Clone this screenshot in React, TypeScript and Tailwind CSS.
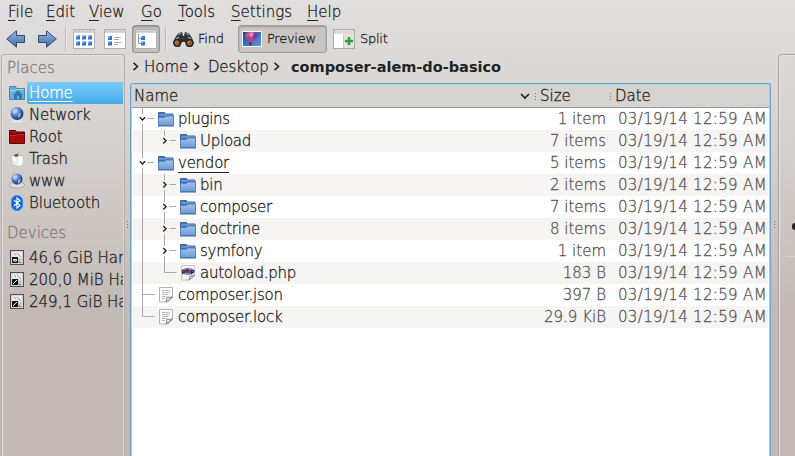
import React from 'react';

type Row = { name: string; depth: number; kind: 'folder' | 'php' | 'text'; open?: boolean; size: string };

const rows: Row[] = [
  { name: 'plugins', depth: 0, kind: 'folder', open: true, size: '1 item' },
  { name: 'Upload', depth: 1, kind: 'folder', size: '7 items' },
  { name: 'vendor', depth: 0, kind: 'folder', open: true, size: '5 items' },
  { name: 'bin', depth: 1, kind: 'folder', size: '2 items' },
  { name: 'composer', depth: 1, kind: 'folder', size: '7 items' },
  { name: 'doctrine', depth: 1, kind: 'folder', size: '8 items' },
  { name: 'symfony', depth: 1, kind: 'folder', size: '1 item' },
  { name: 'autoload.php', depth: 1, kind: 'php', size: '183 B' },
  { name: 'composer.json', depth: 0, kind: 'text', size: '397 B' },
  { name: 'composer.lock', depth: 0, kind: 'text', size: '29.9 KiB' },
];

function Folder() {
  return (
    <svg width="16" height="16" viewBox="0 0 16 16" className="block shrink-0">
      <defs>
        <linearGradient id="folderFront" x1="0" y1="0" x2="0" y2="1">
          <stop stopColor="#a3c4ea" />
          <stop offset="1" stopColor="#6c9ad6" />
        </linearGradient>
      </defs>
      <path d="M.5 14V1.500h6l1 1.500h7.500v3H.5z" fill="#4977b5" stroke="#3a659f" />
      <path d="M1 4h6l1-1h6.500" stroke="#83b0e5" fill="none" />
      <path d="M.5 6.500h6l1-1.500h8v9.500H.5z" fill="url(#folderFront)" stroke="#5482be" />
      <path d="M0 15h16" stroke="#3f6aa5" />
    </svg>
  );
}

function TextDoc() {
  return (
    <svg width="16" height="16" viewBox="0 0 16 16" className="block shrink-0">
      <path d="M1.500.5h13v10l-4.500 4.500H1.500z" fill="#fcfcfc" stroke="#b4b4b4" />
      <path d="M4 3.500h8M4 5.500h8M4 7.500h7M4 9.500h5M4 11.500h3" stroke="#b5b5b5" strokeDasharray="3 .5" />
      <path d="M8 15l1-4.500 5.500-.5z" fill="#eee" stroke="#777" strokeWidth=".9" />
    </svg>
  );
}

function PhpDoc() {
  return (
    <svg width="16" height="16" viewBox="0 0 16 16" className="block shrink-0">
      <path d="M1.500.5h13v10l-4.500 4.500H1.500z" fill="#f4f4f6" stroke="#c5c5c8" />
      <path d="M9 15l1-4 4.500-.5z" fill="#ddd" stroke="#777" strokeWidth=".8" />
      <ellipse cx="8" cy="6.500" rx="6.500" ry="3.500" fill="#8a7fc0" />
      <text x="8" y="8.300" textAnchor="middle" fontFamily="DejaVu Sans, sans-serif" fontSize="6" fontWeight="bold" stroke="none" fill="#1c1637">php</text>
    </svg>
  );
}

function Globe({ dish }: { dish?: boolean }) {
  return (
    <svg width="16" height="16" viewBox="0 0 16 16" className="block shrink-0">
      <defs>
        <radialGradient id="sea" cx=".35" cy=".3" r=".7">
          <stop stopColor="#cfe3fb" />
          <stop offset=".45" stopColor="#5a86cd" />
          <stop offset="1" stopColor="#17347e" />
        </radialGradient>
      </defs>
      {dish ? <ellipse cx="8" cy="12" rx="7.500" ry="3" fill="#dcdedf" stroke="#979b9f" strokeWidth=".7" /> : <path d="M3 14.500h10" stroke="#eee" strokeWidth="1.500" />}
      <circle cx="8" cy={dish ? 6 : 6.500} r={dish ? 5.500 : 6.500} fill="url(#sea)" />
      <path d="M4 3l3-1 1 2-2 3-2-1zM9 7l3-1-1 4-2 1z" fill="#bdd4ed" opacity=".65" />
    </svg>
  );
}

function HomeFolder() {
  return (
    <svg width="16" height="16" viewBox="0 0 16 16" className="block shrink-0">
      <path d="M.5 14.500v-13h6l1 2h8v11z" fill="#67aed9" stroke="#4088b6" />
      <path d="M1 5.500h5l1-1h8" stroke="#a4daf4" fill="none" />
      <path d="M4 10l5-4.500 5 4.500h-1v4h-3v-3H8v3H5v-4z" fill="#2f7cac" />
    </svg>
  );
}

function RootFolder() {
  return (
    <svg width="16" height="16" viewBox="0 0 16 16" className="block shrink-0">
      <path d="M.5 14.500v-13h6l1 1.500h8v11.500z" fill="#a60b0b" stroke="#650000" />
      <path d="M1 5.500h6l1-1h7" stroke="#5d0000" fill="none" />
      <path d="M1 6.500h6l1-1h7" stroke="#c83232" fill="none" />
    </svg>
  );
}

function Trash() {
  return (
    <svg width="16" height="16" viewBox="0 0 16 16" className="block shrink-0">
      <path d="M2 5l5-1.500 7 1.500-.5 9L9 15.700 2.500 14z" fill="#e4e4e4" stroke="#aaa" strokeWidth=".6" />
      <path d="M2 5l6 2 6-2-.7 9L8 15.500z" fill="#fafafa" />
      <path d="M8 7v8.500" stroke="#ccc" strokeWidth=".7" />
      <path d="M5 4.500l2-1.500 1.500.5L9.500 1l-.5 4-2 1z" fill="#574c3a" />
      <path d="M8 3l2-2.500" stroke="#d8b845" />
    </svg>
  );
}

function Bluetooth() {
  return (
    <svg width="16" height="16" viewBox="0 0 16 16" className="block shrink-0">
      <rect x="2.500" y=".5" width="11" height="15" rx="5.300" fill="#1766d7" stroke="#3e8df0" />
      <path d="M5 5l6 5.500-3 2.500V3l3 2.500L5 11" stroke="#fff" fill="none" strokeWidth="1.100" />
    </svg>
  );
}

function Disk({ root }: { root?: boolean }) {
  return (
    <svg width="16" height="16" viewBox="0 0 16 16" className="block shrink-0">
      <rect x="1.500" y=".5" width="13" height="14" fill="#d4d5d4" stroke="#4d504e" />
      <path d="M3 2h10v6H3z" fill="#e8e9e8" />
      <path d="M8 3l4 4M12 9l-3 3M5 3l2 2" stroke="#9a9e9a" />
      <path d="M3 7h6v6H3z" fill="#151515" />
      {root ? <path d="M4.500 11V9.500h3V11z" stroke="#fff" fill="none" /> : <path d="M4 12l4-4" stroke="#fff" />}
      <path d="M9.500 12.500h3" stroke="#777" />
    </svg>
  );
}

function Arrow({ right }: { right?: boolean }) {
  return (
    <svg width="20" height="18" viewBox="0 0 20 18" className={right ? 'block -scale-x-100' : 'block'}>
      <defs>
        <linearGradient id="arrowFill" x1="0" y1="0" x2="0" y2="1">
          <stop stopColor="#9cbde3" />
          <stop offset=".5" stopColor="#6b90c2" />
          <stop offset="1" stopColor="#456da5" />
        </linearGradient>
      </defs>
      <path d="M.7 9L10.500.8v4.700h8v7h-8v4.700z" fill="url(#arrowFill)" stroke="#2f4a72" strokeLinejoin="round" />
    </svg>
  );
}

function ViewIcon({ kind }: { kind: 'icons' | 'compact' | 'tree' }) {
  return (
    <svg width="22" height="20" viewBox="0 0 22 20" className="block">
      <rect x=".5" y=".5" width="21" height="19" fill="#fff" stroke="#b0b0b0" />
      <path d="M1 2.500h20" stroke="#d8d5d9" strokeWidth="3" />
      <path d="M2 2.500h18" stroke="#bdb8c0" strokeDasharray="1 1" />
      {kind === 'icons' && (
        <g>
          <path d="M3 8.500h4M9 8.500h4M15 8.500h4M3 14.500h4M9 14.500h4M15 14.500h4" stroke="#2d73d2" strokeWidth="4" />
          <path d="M3 7.500h2M9 7.500h2M15 7.500h2M3 13.500h2M9 13.500h2M15 13.500h2" stroke="#8bb8ee" strokeWidth="1.500" />
        </g>
      )}
      {kind === 'compact' && (
        <g>
          <path d="M4 9h4M4 14.500h4" stroke="#2d73d2" strokeWidth="4" />
          <path d="M4 8h2M4 13.500h2" stroke="#8bb8ee" strokeWidth="1.500" />
          <path d="M10 8.500h7M10 10.500h5M10 13.500h7M10 15.500h4" stroke="#aaa" />
        </g>
      )}
      {kind === 'tree' && (
        <g>
          <path d="M3.500 5v9.500H7M3.500 9.500H7" stroke="#999" fill="none" />
          <path d="M6 9h4M6 14.500h4" stroke="#2d73d2" strokeWidth="4" />
          <path d="M6 8h2M6 13.500h2" stroke="#8bb8ee" strokeWidth="1.500" />
        </g>
      )}
    </svg>
  );
}

function Binoculars() {
  return (
    <svg width="23" height="18" viewBox="0 0 23 18" className="block">
      <path d="M1 13l2-5 3-4.500L10 2l1 4h1l1-4 4 1.500L20 8l2 5-2 3.500h-5L13 12h-3l-2 4.500H3z" fill="#303134" />
      <path d="M6 4.500l3-1M14 3.500l3 1M4 9l3-2M16 7l3 2" stroke="#a2a6ab" strokeWidth="1.200" />
      <circle cx="5" cy="13" r="3.300" fill="#96562f" stroke="#222" strokeWidth="1.300" />
      <circle cx="17.500" cy="13" r="3.300" fill="#96562f" stroke="#222" strokeWidth="1.300" />
      <path d="M3.500 13l2-2M16 13l2-2" stroke="#dda17a" />
    </svg>
  );
}

function Balloon() {
  return (
    <svg width="20" height="16" viewBox="0 0 20 16" className="block shrink-0">
      <defs>
        <linearGradient id="sky" x1="0" y1="0" x2="1" y2="1">
          <stop stopColor="#173f93" />
          <stop offset="1" stopColor="#5f9fee" />
        </linearGradient>
      </defs>
      <rect x=".5" y=".5" width="19" height="15" fill="url(#sky)" stroke="#f3f5f8" />
      <path d="M3 4c0-4 13-4 13 0 0 3-4 5-6 8H8C7 9 3 7 3 4z" fill="#b8448a" />
      <path d="M4 3c1-2 3-2 4-2L6 6 4 5z" fill="#c9566a" />
      <path d="M8 1.500h4L10 6 7 5z" fill="#d58fc4" />
      <path d="M12 2c3 0 4 2 3 4l-4 3z" fill="#6c3f90" />
      <path d="M7 11.500h2.500v3H7z" fill="#55372b" />
    </svg>
  );
}

function SplitIcon() {
  return (
    <svg width="22" height="20" viewBox="0 0 22 20" className="block">
      <rect x=".5" y=".5" width="21" height="19" fill="#fff" stroke="#aaa" />
      <path d="M1 3h20" stroke="#e0dde1" strokeWidth="4" />
      <path d="M2 3h18" stroke="#c4bec7" strokeDasharray="1 1" />
      <path d="M11 5h10v14H11z" fill="#e2e2e2" />
      <path d="M10.500 5v14" stroke="#ccc" />
      <path d="M12 12h8M16 8v8" stroke="#329b35" strokeWidth="2.500" />
    </svg>
  );
}

function Chevron({ className = '' }: { className?: string }) {
  return (
    <svg width="8" height="9" viewBox="0 0 8 9" className={`block shrink-0 ${className}`}>
      <path d="M1.500.8L5.500 4.500 1.500 8.200" fill="none" stroke="#242424" strokeWidth="1.600" />
    </svg>
  );
}

function Branch({ row, last }: { row: Row; last: boolean }) {
  const child = row.depth === 1;
  const width = child ? 47 : 25;
  const x = child ? 31.5 : 9.5;
  const lines: string[] = [];
  if (child) lines.push('M9.500 0v22');
  if (row.kind === 'folder') {
    lines.push(`M${x} 0v6M${x + 5} 10.500h6.500`);
    if (row.name !== 'Upload') lines.push(`M${x} 16v6`);
  } else if (child || last) {
    lines.push(`M${x} 0v10.500h12`);
  } else {
    lines.push('M9.500 0v22M9.500 10.500h12');
  }
  return (
    <svg width={width} height="22" viewBox={`0 0 ${width} 22`} className="block shrink-0">
      <path d={lines.join('')} stroke="#aaa" fill="none" />
      {row.kind === 'folder' && (
        <path d={row.open ? 'M6.800 9.300l2.700 2.700 2.700-2.700' : 'M30.300 8l2.700 2.700-2.700 2.700'} stroke="#222" strokeWidth="1.400" fill="none" />
      )}
    </svg>
  );
}

function Grip() {
  return (
    <div className="flex flex-col gap-[2px]">
      {[0, 1, 2].map((i) => <i key={i} className="block size-px bg-[#777]" />)}
    </div>
  );
}

const menus = [
  ['File', 'w-[38px]'], ['Edit', 'w-[43px]'], ['View', 'w-[52px]'], ['Go', 'w-[37px]'],
  ['Tools', 'w-[53px]'], ['Settings', 'w-[76px]'], ['Help', 'w-[50px]'],
];

const places: [string, React.ReactNode][] = [
  ['Home', <HomeFolder />], ['Network', <Globe />], ['Root', <RootFolder />],
  ['Trash', <Trash />], ['www', <Globe dish />], ['Bluetooth', <Bluetooth />],
];

const devices: [string, boolean][] = [['46,6 GiB Har', true], ['200,0 MiB Ha', false], ['249,1 GiB Ha', false]];

export default function App() {
  return (
    <div className="flex h-[456px] w-[795px] flex-col overflow-hidden bg-linear-to-b from-[#e1dfde] via-[#d3cfcc] via-[35%] to-[#c3bab6] to-[67%] font-['DejaVu_Sans',sans-serif] text-[15px] font-extralight leading-[22px] whitespace-nowrap text-[#222] [-webkit-text-stroke:0.3px]">
      <nav className="flex h-6 shrink-0 pt-px pl-2">
        {menus.map(([m, w]) => (
          <span key={m} className={`${w} shrink-0`}><span className="underline decoration-1 underline-offset-[3px]">{m[0]}</span>{m.slice(1)}</span>
        ))}
      </nav>
      <div className="flex h-[30px] shrink-0 items-center pl-[6px] text-[13px] tracking-[-0.25px]">
        <Arrow />
        <div className="ml-[11px]"><Arrow right /></div>
        <i className="mr-[6px] ml-[8px] h-6 w-[2px] border-r border-l border-r-[#eee] border-l-[#bbb]" />
        <ViewIcon kind="icons" />
        <div className="ml-[9px]"><ViewIcon kind="compact" /></div>
        <div className="ml-[6px] flex h-7 w-7 items-center justify-center rounded-[3px] border border-[#96928f] bg-[#c5c1be] shadow-[inset_0_1px_2px_#8d8986]"><ViewIcon kind="tree" /></div>
        <i className="mr-[6px] ml-[5px] h-6 w-[2px] border-r border-l border-r-[#eee] border-l-[#bbb]" />
        <div className="-ml-px"><Binoculars /></div>
        <span className="ml-[3px] w-[40px]">Find</span>
        <div className="flex h-7 w-[89px] items-center rounded-[3px] border border-[#a29d9a] bg-[#cbc6c3] pl-[3px] shadow-[inset_0_1px_2px_#99938f]"><Balloon /><span className="ml-[5px]">Preview</span></div>
        <div className="ml-[6px]"><SplitIcon /></div>
        <span className="ml-[5px]">Split</span>
      </div>
      <div className="flex min-h-0 flex-1">
        <aside className="ml-px w-[124px] shrink-0 overflow-hidden rounded-t-[4px] border border-b-0 border-[#b4aeaa] p-px shadow-[inset_1px_1px_0_#e5e1df,inset_-1px_0_0_#ddd6d3]">
          <h2 className="h-[26px] pt-px pl-1 text-[#817b78]">Places</h2>
          {places.map(([name, icon], i) => (
            <div key={name} className="flex h-[22px] items-center pl-[6px] tracking-[-0.15px]">
              {icon}
              <span className={i === 0 ? 'ml-[2px] h-[22px] flex-1 rounded-l-[3px] bg-linear-to-b from-[#79c9fb] to-[#44ace9] pl-[2px] text-white underline decoration-1 underline-offset-[3px]' : 'ml-1'}>{name}</span>
            </div>
          ))}
          <h2 className="h-[33px] pt-[8px] pl-1 text-[#817b78]">Devices</h2>
          {devices.map(([name, root]) => (
            <div key={name} className="flex h-[22px] items-center overflow-hidden pl-[6px]"><Disk root={root} /><span className="ml-1">{name}</span></div>
          ))}
        </aside>
        <div className="flex w-[5px] shrink-0 justify-center pt-[167px]"><Grip /></div>
        <main className="flex w-[641px] shrink-0 flex-col">
          <div className="flex h-[29px] shrink-0 items-center pb-[4px]">
            <Chevron className="ml-[2px]" /><span className="ml-[4px] w-[48px]">Home</span>
            <Chevron className="ml-px" /><span className="ml-[7px] w-[63px] tracking-[-0.2px]">Desktop</span>
            <Chevron className="ml-[2px]" /><span className="ml-[10px] text-[14.5px] font-bold [-webkit-text-stroke:0]">composer-alem-do-basico</span>
          </div>
          <div className="flex min-h-0 flex-1 flex-col rounded-t-[3px] border border-b-0 border-[#6ea3c6] bg-white shadow-[inset_1px_1px_0_#a9d0ea,inset_-1px_0_0_#a9d0ea]">
            <div className="mx-px mt-px flex h-[23px] shrink-0 items-center border-b border-[#999] bg-[#d7d3d0] pl-[2px]">
              <span className="flex-1">Name</span>
              <svg width="10" height="8" viewBox="0 0 10 8"><path d="M1 2l4 4 4-4" fill="none" stroke="#222" strokeWidth="1.700" /></svg>
              <span className="mr-[4px] ml-[5px]"><Grip /></span><span className="w-[70px]">Size</span>
              <Grip /><span className="ml-[4px] w-[154px]">Date</span>
            </div>
            {rows.map((row, i) => (
              <div key={row.name} className={`mx-[2px] flex h-[22px] shrink-0 items-center ${i % 2 ? 'bg-[#f7f5f4]' : 'bg-white'}`}>
                <Branch row={row} last={i === rows.length - 1} />
                {row.kind === 'folder' ? <Folder /> : row.kind === 'php' ? <PhpDoc /> : <TextDoc />}
                <span className={`ml-1 tracking-[-0.25px] ${row.name === 'vendor' ? 'underline decoration-1 underline-offset-[4px]' : ''}`}>{row.name}</span>
                <span className="ml-auto text-[#555]">{row.size}</span>
                <span className="ml-[12px] w-[150px] tracking-[0.33px] text-[#555]">03/19/14 12:59 AM</span>
              </div>
            ))}
          </div>
        </main>
        <div className="flex w-[7px] shrink-0 justify-center pt-[167px]"><Grip /></div>
        <aside className="flex-1 overflow-hidden rounded-tl-[4px] border-t border-l border-[#aaa5a2] shadow-[inset_1px_1px_0_#e5e1df]">
          <div className="ml-[7px] flex h-[202px] items-end justify-end border-b border-[#d9d3d0] pb-[26px]"><i className="block h-[7px] w-[3px] rounded-l-full bg-[#222]" /></div>
        </aside>
      </div>
    </div>
  );
}
